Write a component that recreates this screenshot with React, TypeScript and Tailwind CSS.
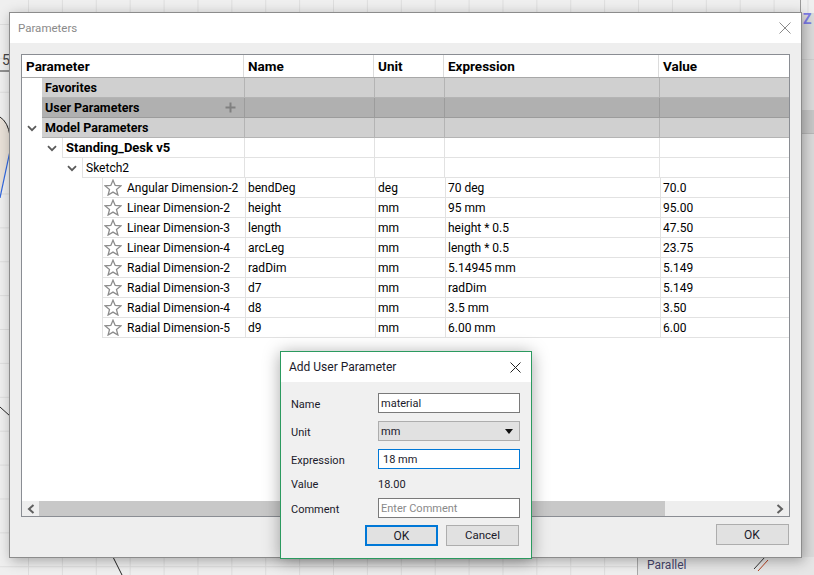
// Parameters dialog with the Add User Parameter popup, over a sketch canvas
import React from 'react'

const font = { fontFamily: 'Roboto, sans-serif' }

const Chevron = ({ className = '' }: { className?: string }) => (
  <svg width="10" height="7" viewBox="0 0 10 7" className={className}>
    <path d="M1 1.2 L5 5.2 L9 1.2" fill="none" stroke="#5a5a5a" strokeWidth="1.8" />
  </svg>
)

const Star = () => (
  <svg width="18" height="17" viewBox="0 0 18 17" className="shrink-0">
    <polygon
      points="9,1.2 11.2,6.5 16.9,6.9 12.5,10.6 13.9,16 9,13.1 4.1,16 5.5,10.6 1.1,6.9 6.8,6.5"
      fill="#fff"
      stroke="#8c8c8c"
      strokeWidth="1.3"
    />
  </svg>
)

const Side = ({ dir }: { dir: 'left' | 'right' }) => (
  <svg width="8" height="10" viewBox="0 0 8 10">
    <path
      d={dir === 'left' ? 'M6.5 1 L2 5 L6.5 9' : 'M1.5 1 L6 5 L1.5 9'}
      fill="none"
      stroke="#606060"
      strokeWidth="2"
    />
  </svg>
)

const params = [
  ['Angular Dimension-2', 'bendDeg', 'deg', '70 deg', '70.0'],
  ['Linear Dimension-2', 'height', 'mm', '95 mm', '95.00'],
  ['Linear Dimension-3', 'length', 'mm', 'height * 0.5', '47.50'],
  ['Linear Dimension-4', 'arcLeg', 'mm', 'length * 0.5', '23.75'],
  ['Radial Dimension-2', 'radDim', 'mm', '5.14945 mm', '5.149'],
  ['Radial Dimension-3', 'd7', 'mm', 'radDim', '5.149'],
  ['Radial Dimension-4', 'd8', 'mm', '3.5 mm', '3.50'],
  ['Radial Dimension-5', 'd9', 'mm', '6.00 mm', '6.00'],
]

const GroupRow = ({ label, dark, chevron }: { label: string; dark?: boolean; chevron?: boolean }) => {
  const cell = dark
    ? 'h-full bg-[#b0b0b0] border-b border-r border-[#9c9c9c]'
    : 'h-full bg-[#d0d0d0] border-b border-r border-[#b4b4b4]'
  return (
    <div className="flex h-5 w-full">
      <div className="flex w-5 h-full items-center justify-center shrink-0">
        {chevron && <Chevron />}
      </div>
      <div className={`${cell} w-[203px] flex items-center justify-between pl-[3px] pr-2 font-bold text-black text-[12.5px]`}>
        <span className="pt-[1px]">{label}</span>
        {dark && (
          <svg width="11" height="11" viewBox="0 0 11 11">
            <path d="M5.5 0.5 V10.5 M0.5 5.5 H10.5" stroke="#808080" strokeWidth="2" />
          </svg>
        )}
      </div>
      <div className={`${cell} w-[130px]`} />
      <div className={`${cell} w-[70px]`} />
      <div className={`${cell} w-[215px]`} />
      <div className={`${cell} flex-1 border-r-0`} />
    </div>
  )
}

const TreeRow = ({ label, indent, bold }: { label: string; indent: 'w-10' | 'w-[60px]'; bold?: boolean }) => (
  <div className="flex h-5 w-full">
    <div className={`${indent} h-full flex items-center justify-end pr-[5px] shrink-0`}>
      <Chevron />
    </div>
    <div className={`flex-1 h-full border-b border-l border-[#e2e2e2] flex items-center pl-[3px] ${bold ? 'font-bold text-[13px]' : ''}`}>
      {label}
    </div>
    <div className="w-[130px] h-full border-b border-l border-[#e2e2e2]" />
    <div className="w-[70px] h-full border-b border-l border-[#e2e2e2]" />
    <div className="w-[215px] h-full border-b border-l border-[#e2e2e2]" />
    <div className="w-[130px] h-full border-b border-l border-[#e2e2e2]" />
  </div>
)

const ParamRow = ({ row }: { row: string[] }) => (
  <div className="flex h-5 w-full">
    <div className="w-20 shrink-0" />
    <div className="w-[143px] h-full border-b border-l border-[#e2e2e2] flex items-center pl-[1px] gap-[5px]">
      <Star />
      <span className="whitespace-nowrap">{row[0]}</span>
    </div>
    <div className="w-[130px] h-full border-b border-l border-[#e2e2e2] flex items-center pl-[2px]">{row[1]}</div>
    <div className="w-[70px] h-full border-b border-l border-[#e2e2e2] flex items-center pl-[2px]">{row[2]}</div>
    <div className="w-[215px] h-full border-b border-l border-[#e2e2e2] flex items-center pl-[2px]">{row[3]}</div>
    <div className="flex-1 h-full border-b border-l border-[#e2e2e2] flex items-center pl-[2px]">{row[4]}</div>
  </div>
)

const Field = ({ label, children }: { label: string; children: React.ReactNode }) => (
  <div className="flex items-center h-5">
    <div className="w-[87px] shrink-0 text-[#1a1a2a] pt-[4px]">{label}</div>
    {children}
  </div>
)

const AddParameter = () => (
  <div className="absolute left-[280px] top-[351px] w-[252px] h-[208px] border border-[#2b9a5f] bg-[#f0f0f0] shadow-[0_2px_16px_rgba(0,0,0,0.35)] text-[11px] text-[#1a1a2a] flex flex-col">
    <div className="h-[30px] bg-white flex items-center justify-between pl-2 pr-[10px] shrink-0">
      <span className="text-[12px]">Add User Parameter</span>
      <svg width="11" height="11" viewBox="0 0 11 11">
        <path d="M0.5 0.5 L10.5 10.5 M10.5 0.5 L0.5 10.5" stroke="#222" strokeWidth="1" />
      </svg>
    </div>
    <div className="flex flex-col pl-[10px] pr-[11px] pt-[11px]">
      <Field label="Name">
        <div className="w-[142px] h-full border border-[#7a7a7a] bg-white flex items-center pl-[2px] pt-[3px]">material</div>
      </Field>
      <div className="mt-2">
        <Field label="Unit">
          <div className="w-[142px] h-full border border-[#adadad] bg-[#e1e1e1] flex items-center justify-between pl-[2px] pr-[6px]">
            <span className="pt-[3px]">mm</span>
            <svg width="8" height="5" viewBox="0 0 8 5"><path d="M0 0 H8 L4 5 Z" fill="#111" /></svg>
          </div>
        </Field>
      </div>
      <div className="mt-2">
        <Field label="Expression">
          <div className="w-[142px] h-full border border-[#0078d7] bg-white flex items-center pl-1 pt-[3px]">18 mm</div>
        </Field>
      </div>
      <div className="mt-[4px]">
        <Field label="Value">
          <span className="pt-[4px]">18.00</span>
        </Field>
      </div>
      <div className="mt-[5px]">
        <Field label="Comment">
          <div className="w-[142px] h-full border border-[#7a7a7a] bg-white flex items-center pl-[2px] pt-[3px] text-[#8a8a8a]">Enter Comment</div>
        </Field>
      </div>
      <div className="flex justify-end gap-2 mt-[7px] mr-[1px] text-[12px]">
        <div className="w-[73px] h-[21px] border-2 border-[#0078d7] bg-[#e1e1e1] flex items-center justify-center">OK</div>
        <div className="w-[73px] h-[21px] border border-[#adadad] bg-[#e1e1e1] flex items-center justify-center text-[11.5px]">Cancel</div>
      </div>
    </div>
  </div>
)

const App = () => (
  <div
    className="relative w-[814px] h-[575px] overflow-hidden bg-[#efefef] text-[12px] text-[#1a1a2a] bg-[linear-gradient(to_right,#dedede_1px,transparent_1px),linear-gradient(to_bottom,#dedede_1px,transparent_1px)] bg-[size:33.9px_33.9px] bg-[position:28px_24px]"
    style={font}
  >
    {/* canvas behind the dialog */}
    <svg width="814" height="575" viewBox="0 0 814 575" className="absolute left-0 top-0">
      <path d="M0 117 Q8 122 10 136 V151 L0 198 Z" fill="#e9e1d8" />
      <path d="M0 117 Q8 122 10 136" fill="none" stroke="#222" strokeWidth="1" />
      <path d="M10 151 L0 198" stroke="#2f66e0" strokeWidth="1.2" />
      <path d="M0 71 H10" stroke="#333" strokeWidth="1" />
      <path d="M0 407 L10 416" stroke="#222" strokeWidth="1" />
      <path d="M113 557 L122 575" stroke="#222" strokeWidth="1" />
      <path d="M800.5 0 V13" stroke="#9a9a9a" strokeWidth="1" />
    </svg>
    <div className="absolute left-[2px] top-[52px] text-[14px] leading-4 text-[#444]">5</div>
    <div className="absolute left-[801px] top-[13px] w-[13px] h-[562px] bg-[#dcdcdc] flex flex-col">
      <div className="h-[47px] border-b border-[#cfcfcf]" />
      <div className="h-[50px]" />
      <div className="h-6 bg-[#c8c8c8] border-b border-[#b8b8b8]" />
    </div>
    <div className="absolute left-[803px] top-[9px] text-[14px] leading-5 font-bold text-[#7d7de8]">Z</div>
    <div className="absolute left-[637px] top-[557px] w-[177px] h-[18px] bg-[#e6e6e6] border-l border-[#a8a8a8] pl-[9px] text-[#45456a] leading-[14px] pt-[1px]">
      Parallel
      <svg width="16" height="18" viewBox="0 0 16 18" className="absolute left-[116px] top-0">
        <path d="M0 12 L11 0" stroke="#333" strokeWidth="1" />
        <path d="M4 14 L14 3" stroke="#b5401f" strokeWidth="1" />
      </svg>
    </div>

    {/* Parameters window */}
    <div className="absolute left-[9px] top-[12px] w-[793px] h-[546px] border border-[#8c8c8c] bg-[#eeeeee] shadow-[2px_3px_12px_rgba(0,0,0,0.3)] flex flex-col">
      <div className="h-[30px] bg-white flex items-center justify-between pl-[8px] pr-[10px] shrink-0">
        <span className="text-[#8a8a8a] text-[11.5px] pt-[1px]">Parameters</span>
        <svg width="12" height="12" viewBox="0 0 12 12">
          <path d="M0.5 0.5 L11.5 11.5 M11.5 0.5 L0.5 11.5" stroke="#8a8a8a" strokeWidth="1" />
        </svg>
      </div>
      <div className="flex flex-col flex-1 px-[11px] pt-[11px]">
        <div className="h-[463px] w-[769px] border border-[#8a8d93] bg-white flex flex-col text-black">
          {/* header */}
          <div className="flex h-[23px] shrink-0 border-b border-[#a8a8a8] font-bold text-[13.5px]">
            <div className="w-[222px] border-r border-[#dcdcdc] flex items-center pl-[4px]">Parameter</div>
            <div className="w-[130px] border-r border-[#dcdcdc] flex items-center pl-[4px]">Name</div>
            <div className="w-[70px] border-r border-[#dcdcdc] flex items-center pl-[4px]">Unit</div>
            <div className="w-[215px] border-r border-[#dcdcdc] flex items-center pl-[4px]">Expression</div>
            <div className="flex-1 flex items-center pl-[4px]">Value</div>
          </div>
          <div className="flex-1 flex flex-col">
            <GroupRow label="Favorites" />
            <GroupRow label="User Parameters" dark />
            <GroupRow label="Model Parameters" chevron />
            <TreeRow label="Standing_Desk v5" indent="w-10" bold />
            <TreeRow label="Sketch2" indent="w-[60px]" />
            {params.map(row => (
              <ParamRow key={row[0]} row={row} />
            ))}
          </div>
          {/* scrollbar */}
          <div className="h-[15px] flex items-center bg-[#eeeeee] shrink-0">
            <div className="w-[17px] flex items-center justify-center"><Side dir="left" /></div>
            <div className="w-[626px] h-full bg-[#c8c8c8]" />
            <div className="flex-1 flex items-center justify-end pr-[5px]"><Side dir="right" /></div>
          </div>
        </div>
        <div className="flex justify-end mt-[7px] mr-[1px]">
          <div className="w-[73px] h-[21px] border border-[#adadad] bg-[#e1e1e1] flex items-center justify-center text-[#1a1a2a] pr-[1px]">OK</div>
        </div>
      </div>
    </div>

    <AddParameter />
  </div>
)

export default App
